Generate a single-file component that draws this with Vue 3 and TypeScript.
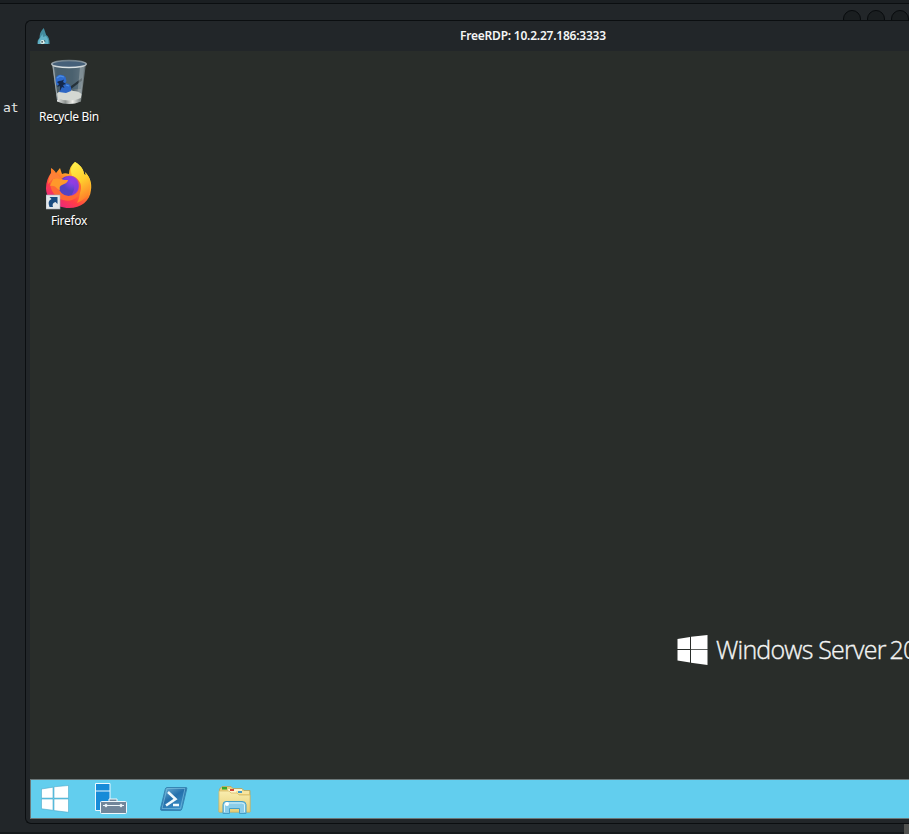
<script setup lang="ts">
const title: string = 'FreeRDP: 10.2.27.186:3333'
const controls: string[] = ['minimize', 'maximize', 'close']
</script>

<template>
  <main class="screen">
    <header class="host-bar">
      <span v-for="control in controls" :key="control" class="host-control"></span>
    </header>
    <div class="workspace">
      <aside class="terminal">at</aside>
      <section class="rdp-window">
        <header class="title-bar">
          <svg class="app-icon" width="13" height="16" viewBox="0 0 13 16">
            <path d="M6.8 0 9.2 7Q12.7 9 12.6 16H.5Q.1 12 2.5 10 2.5 4 6.8 0Z" fill="#438b9e" />
            <path d="M3 10 5.5 6 6 9l3-1q3 3 2 8H1Q1 12 3 10Z" fill="#63b2c7" />
            <ellipse cx="5.6" cy="14" rx="2.3" ry="2" fill="#e4f0e9" />
            <circle cx="5.1" cy="13.9" r=".8" fill="#173340" />
            <path d="m7 13 1-1 .3 2Z" fill="#172b32" />
          </svg>
          <h1 class="title">{{ title }}</h1>
        </header>

        <div class="desktop">
          <div class="shortcuts">
            <div class="shortcut recycle">
              <svg width="38" height="46" viewBox="0 0 38 46">
                <defs>
                  <linearGradient id="glass"><stop stop-color="#8c999f" /><stop offset=".15" stop-color="#4a5a63" /><stop offset=".6" stop-color="#53656e" /><stop offset=".83" stop-color="#858f93" /><stop offset="1" stop-color="#59666b" /></linearGradient>
                  <linearGradient id="rim" x2="0" y2="1"><stop stop-color="#707f88" /><stop offset="1" stop-color="#dfe5e6" /></linearGradient>
                  <linearGradient id="bin-base"><stop stop-color="#e5e7e5" /><stop offset=".35" stop-color="#8e9390" /><stop offset=".65" stop-color="#eeeeea" /><stop offset="1" stop-color="#777f7e" /></linearGradient>
                </defs>
                <path d="M2 4.5Q19 10 36 4.5L31 42Q19 48 7 42Z" fill="url(#glass)" />
                <path d="M4 7Q20 11 34 7l-3 23H7Z" fill="#47606f" opacity=".7" />
                <path d="M19 28.5 32 19v2.5L21 30Z" fill="#26323a" />
                <path d="M30 8h4l-3 30-4 1Z" fill="#a6afb2" opacity=".5" />
                <path d="M6.5 35q2-3 7-3 5-2 10 0 5 0 8 3l-1 6q-11 5-23 0Z" fill="#d4d8d3" />
                <path d="M7 39q12 5 24 0v3.5q-12 5-24 0Z" fill="url(#bin-base)" />
                <path d="M5.5 23q-1-5 3-7 4-1 7 2l1 4-3 5-7-1Z" fill="#2e6bcd" />
                <path d="M12 26q3-3 7-1 3 3 2 7l-5 2-7-1Z" fill="#2c66c4" />
                <path d="m9 22 3-.5 2-1-1 2.5 3 2-3 1 1.5 3-2.5-1-2 4v-5l-3 1 2-3-2-2Z" fill="#14284b" />
                <path d="m7 19 3-2 4 1M16 26l3 1" fill="none" stroke="#4e90e5" stroke-width="1.2" />
                <path d="M3 6 7.5 41" stroke="#9aa5a9" stroke-width="1" />
                <ellipse cx="19" cy="5" rx="17.2" ry="3.6" fill="#466079" stroke="url(#rim)" stroke-width="1.5" />
              </svg>
              <span class="label bin-label">Recycle Bin</span>
            </div>
            <div class="shortcut firefox">
              <svg width="46" height="50" viewBox="0 0 46 50">
                <defs>
                  <linearGradient id="fire" x1=".85" y1=".05" x2=".2" y2=".95"><stop stop-color="#fff04e" /><stop offset=".25" stop-color="#ffc329" /><stop offset=".48" stop-color="#ff7e2b" /><stop offset=".72" stop-color="#ff3d47" /><stop offset="1" stop-color="#e72385" /></linearGradient>
                  <radialGradient id="globe" cx=".7" cy=".25"><stop stop-color="#9b3ff0" /><stop offset=".55" stop-color="#7542db" /><stop offset="1" stop-color="#5343c2" /></radialGradient>
                  <linearGradient id="flame" x2=".3" y2="1"><stop stop-color="#fff44f" /><stop offset=".55" stop-color="#ffcf2d" /><stop offset="1" stop-color="#ff852a" /></linearGradient>
                </defs>
                <path d="M29 1c7 4 9 9 9 12l2 1-1-3c5 5 7 11 6 18-1 11-10 18-22 18C10 47 0 38 0 27c0-6 2-11 5-15l0-5c2 1 4 3 5 5l4-5 2 6c2-1 4-1 7 0 0-5 2-9 6-12Z" fill="url(#fire)" />
                <path d="M29 1c7 4 9 9 9 13l2 1-1-4c5 5 6 10 5 16-1 8-6 12-13 15 4-7 4-15-1-22-6-6-7-13-1-19Z" fill="url(#flame)" />
                <path d="M4 21c4-3 7-4 12-3 7-7 18-2 19 7 1 10-8 17-18 14C9 37 4 29 4 21Z" fill="#ff6835" />
                <circle cx="22.5" cy="25" r="10" fill="url(#globe)" />
                <path d="M22 15c7-1 11 4 11 10s-3 8-8 10c5-8 4-11-1-15-3-3-6-1-8 0 1-2 3-4 6-5Z" fill="#923cde" opacity=".7" />
                <path d="M7 18c4-2 7-1 11 1h4c0 2-3 4-6 5-2 1-3 2-2 5-4-1-4-5-10-4Z" fill="#ff982b" />
                <path d="M6 11c5 1 7 4 10 8-5-2-8-3-11 1l-3 3c1-5 1-8 4-12Z" fill="#ff8137" />
                <g class="shortcut-badge">
                  <rect y="34" width="14" height="14" fill="#e3e7ea" stroke="#a3acb4" stroke-width=".6" />
                  <path d="M3.5 46q-2.5-6 2-8l-2-2H11.5v7l-2-2q-4 1-2.5 5Z" fill="#194b80" />
                </g>
              </svg>
              <span class="label firefox-label">Firefox</span>
            </div>
          </div>
          <div class="branding">
            <svg width="31" height="30" viewBox="0 0 31 30" fill="#fff">
              <path d="M.5 4 13 2v12H.5ZM14 1.8 30.5 0v14.2H14ZM.5 15.1H13v12.4L.5 25.5ZM14 15.1h16.5V30L14 27.7Z" />
            </svg>
            <span class="brand-name">Windows Server<span class="brand-year">20</span></span>
          </div>
        </div>

        <footer class="taskbar">
          <svg class="start" width="28" height="28" viewBox="0 0 28 28">
            <path d="M.5 4 12 2.2v10.9H.5ZM13 1.8 27.5.5v12.6H13ZM.5 14h11.5v11.3L.5 23.8ZM13 14h14.5v13.3L13 25.6Z" fill="#fff" stroke="#4fa9c9" stroke-width=".6" />
          </svg>
          <svg class="server" width="34" height="33" viewBox="0 0 34 33">
            <path d="M1.5 1.5H16v27H1.5ZM1.5 9H16" fill="#178bd8" stroke="#eaf8ff" />
            <rect x="6.5" y="19.5" width="26" height="12" rx="1" fill="#71869a" stroke="#eff7fb" />
            <path d="M15 19v-2h8v2" fill="#71869a" stroke="#eff7fb" />
            <path d="M9 23.5h21" fill="none" stroke="#eff7fb" />
            <path d="m12 21.5-2 2 2 2 2-2ZM27 21.5l-2 2 2 2 2-2Z" fill="#eff7fb" />
          </svg>
          <svg class="powershell" width="29" height="26" viewBox="0 0 29 26">
            <defs><linearGradient id="ps" x2=".7" y2="1"><stop stop-color="#74b8da" /><stop offset=".5" stop-color="#2470ac" /><stop offset="1" stop-color="#3c93cb" /></linearGradient></defs>
            <path d="M8 1.5h19q1 0 .8 1L23 22.5q-.5 2-2 2H3q-2 0-1.5-2l4.7-19q.4-2 1.8-2Z" fill="url(#ps)" stroke="#3686b3" />
            <path d="M8 2.5h18L21.5 22.5H3Z" fill="none" stroke="#78bddd" stroke-width=".7" />
            <path d="m9 6 7.5 7-9.5 6.500M14 19h6" fill="none" stroke="#edf8fc" stroke-width="2.6" />
          </svg>
          <svg class="explorer" width="34" height="31" viewBox="0 0 34 31">
            <defs><linearGradient id="folder" x2="0" y2="1"><stop stop-color="#f9edaf" /><stop offset="1" stop-color="#e7cf78" /></linearGradient></defs>
            <path d="M1.500 4 4 1.500h9l2 2h9l2 2h6V27h-31Z" fill="#e9cf7b" stroke="#b99e52" stroke-width=".7" />
            <path d="M4 2h5v2.500H4Z" fill="#34a82b" /><path d="M10 4h14v4H10Z" fill="#fff5cf" />
            <path d="M12 4h4v2h-4Z" fill="#d54837" /><path d="M18 6h13v3H18Z" fill="#f8e59f" /><path d="M20 6h4v2h-4Z" fill="#4499c4" />
            <path d="M1 6h10l2 2h6l2 2h11v17H1Z" fill="url(#folder)" stroke="#d8bd68" stroke-width=".8" />
            <path d="M5 28.500v-9q0-3 3-3h16q4 0 4 3v9h-6.500v-5h-10v5Z" fill="#8bcde9" stroke="#459fc7" />
            <path d="M6.500 27v-7q0-2 2-2h15q3 0 3 2v7" fill="none" stroke="#d6f2fa" />
            <circle cx="9" cy="19" r="2" fill="#fff" />
          </svg>
        </footer>
      </section>
    </div>
    <footer class="host-footer"><span class="corner"></span></footer>
  </main>
</template>

<style>
body { background: #222629; overflow: hidden; }
</style>

<style scoped>
* { box-sizing: border-box; }
.screen { width: 909px; height: 834px; display: flex; flex-direction: column; overflow: hidden; background: #222629; font-family: "Noto Sans", sans-serif; }
.host-bar { height: 20px; flex-shrink: 0; display: flex; gap: 6px; padding-left: 843px; padding-top: 7px; border-top: 3px solid #1b1f22; box-shadow: inset 0 1px #0b0e10; overflow: hidden; }
.host-control { width: 18px; height: 18px; flex-shrink: 0; border: 1px solid #080b0d; border-radius: 50%; background: #1a1e20; }
.workspace { height: 804px; display: flex; flex-shrink: 0; }
.terminal { width: 25px; flex-shrink: 0; padding: 79px 0 0 3px; color: #e3e5e5; font: 13px/17px "DejaVu Sans Mono", monospace; }
.rdp-window { width: 884px; display: flex; flex-direction: column; border: solid #0b0e10; border-width: 1px 0 1px 1px; border-radius: 6px 0 0 6px; overflow: hidden; background: #222629; }
.title-bar { height: 30px; flex-shrink: 0; display: flex; align-items: center; padding-left: 11px; }
.app-icon { flex-shrink: 0; }
.title { margin: 0 0 0 410px; color: #f4f5f5; font-size: 12px; line-height: 18px; font-weight: 600; white-space: nowrap; letter-spacing: -.22px; }
.desktop { height: 728px; flex-shrink: 0; margin-left: 4px; display: flex; flex-direction: column; justify-content: space-between; background: #292d2a; }
.shortcuts { width: 78px; padding-top: 8px; display: flex; flex-direction: column; }
.shortcut { display: flex; flex-direction: column; align-items: center; }
.firefox { margin-top: 35px; }
.label { color: #fff; font: 12px/18px "Noto Sans", sans-serif; white-space: nowrap; text-shadow: 1px 1px 1px #111; }
.bin-label { margin-top: 3px; letter-spacing: -.3px; }
.firefox-label { margin-top: 1px; letter-spacing: -.3px; }
.branding { display: flex; align-items: center; align-self: flex-start; height: 36px; margin: 0 0 111px 647px; gap: 8px; }
.branding svg { flex-shrink: 0; }
.brand-name { height: 36px; color: #f4f5f4; font: 350 25px/34px "Open Sans", sans-serif; white-space: nowrap; letter-spacing: -.78px; -webkit-text-stroke: .35px #f4f5f4; }
.brand-year { margin-left: 4px; }
.taskbar { height: 40px; flex-shrink: 0; display: flex; align-items: center; margin-left: 4px; padding-left: 10px; border: 1px solid #6b7778; border-right: 0; background: #62ceee; }
.taskbar svg { flex-shrink: 0; }
.start { margin-bottom: 1px; }
.server { margin-left: 25px; margin-bottom: 1px; }
.powershell { margin-left: 31px; }
.explorer { margin-left: 30px; margin-top: 2px; }
.host-footer { height: 10px; flex-shrink: 0; display: flex; justify-content: flex-end; border-bottom: 2px solid #15191b; }
.corner { width: 5px; height: 10px; background: #50514f; }
</style>
